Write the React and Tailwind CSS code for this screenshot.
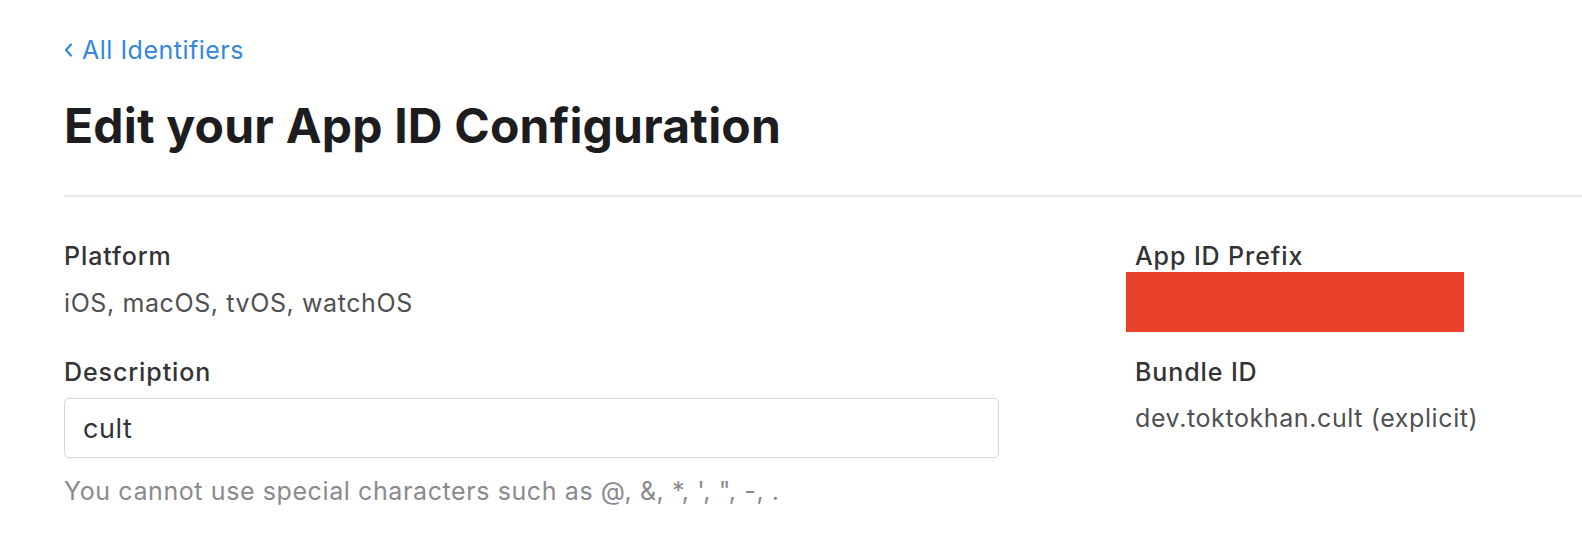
import React from "react";

const font = { fontFamily: "Inter, 'Noto Sans', sans-serif" };

function Label({ children }) {
  return (
    <div className="h-[30px] text-[25px] leading-[30px] font-medium tracking-[0.9px] text-[#333335]">
      {children}
    </div>
  );
}

export default function App() {
  return (
    <div className="min-h-screen bg-white" style={font}>
      <div className="pl-16 pt-[35px]">
        <a href="#" className="flex h-[30px] items-center gap-[9px] text-[25px] leading-[30px] tracking-[0.5px] text-[#3487dc]">
          <svg width="9" height="14" viewBox="0 0 9 14" fill="none">
            <polyline points="7,1.5 2,7 7,12.5" stroke="currentColor" strokeWidth="2.2" strokeLinecap="round" strokeLinejoin="round" />
          </svg>
          <span>All Identifiers</span>
        </a>
        <h1 className="mt-[33px] h-[56px] text-[48px] leading-[56px] font-bold tracking-[0.2px] text-[#1d1d1f]">
          Edit your App ID Configuration
        </h1>
      </div>

      <div className="ml-16 mt-[41px] h-[2px] bg-[#e8e8ea]" />

      <div className="flex pl-16 pt-[44px]">
        {/* left column */}
        <div className="w-[935px]">
          <Label>Platform</Label>
          <div className="mt-[17px] text-[25px] leading-[30px] tracking-[0.6px] text-[#505053]">iOS, macOS, tvOS, watchOS</div>
          <div className="mt-[39px]">
            <Label>Description</Label>
          </div>
          <input
            className="mt-[11px] block h-[60px] w-full rounded-[5px] border border-[#d6d6d9] px-[18px] text-[27px] tracking-[0.6px] text-[#333336] outline-none"
            defaultValue="cult"
          />
          <div className="mt-[18px] text-[25px] leading-[30px] tracking-[0.6px] text-[#8a8a8e]">
            You cannot use special characters such as @, &amp;, *, ', ", -, .
          </div>
        </div>

        {/* right column */}
        <div className="ml-[136px]">
          <Label>App ID Prefix</Label>
          <div className="ml-[-9px] mt-[1px] h-[60px] w-[338px] bg-[#e9412a]" />
          <div className="mt-[25px]">
            <Label>Bundle ID</Label>
          </div>
          <div className="mt-[16px] text-[25px] leading-[30px] tracking-[0.6px] text-[#505053]">dev.toktokhan.cult (explicit)</div>
        </div>
      </div>
    </div>
  );
}
